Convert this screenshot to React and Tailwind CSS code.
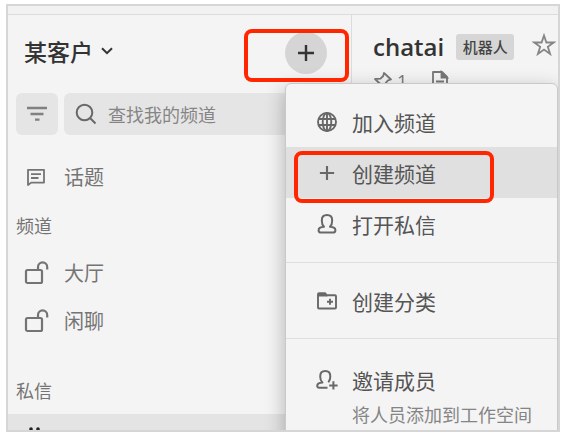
import React from 'react';

const channels = ['大厅', '闲聊'];

const ChevronIcon = () => (
  <svg width="12" height="8" viewBox="0 0 12 8" fill="none" stroke="currentColor" strokeWidth="2">
    <path d="M1 1.2 6 6.2 11 1.2" />
  </svg>
);

const PlusIcon = ({ size = 18 }) => (
  <svg width={size} height={size} viewBox="0 0 18 18" fill="none" stroke="currentColor" strokeWidth="2.4">
    <path d="M9 1v16M1 9h16" />
  </svg>
);

const FilterIcon = () => (
  <svg width="22" height="16" viewBox="0 0 22 16" fill="none" stroke="currentColor" strokeWidth="2.4">
    <path d="M1 2h20M4.5 8h13M9 13.6h4.5" />
  </svg>
);

const SearchIcon = () => (
  <svg width="22" height="22" viewBox="0 0 22 22" fill="none" stroke="currentColor" strokeWidth="2">
    <circle cx="9.5" cy="9.5" r="7.8" />
    <path d="m15 15 5.5 5.5" />
  </svg>
);

const ThreadsIcon = () => (
  <svg width="20" height="20" viewBox="0 0 20 20" fill="none" stroke="currentColor" strokeWidth="1.8">
    <path d="M2 18V2.8h16v12.8H5.2z" strokeLinejoin="round" />
    <path d="M5 7.2h10M5 11h7.5" />
  </svg>
);

const UnlockIcon = () => (
  <svg width="26" height="24" viewBox="0 0 26 24" fill="none" stroke="currentColor" strokeWidth="2.2">
    <rect x="2" y="9" width="16" height="13" rx="1.5" />
    <path d="M14 9V6a4.6 4.6 0 0 1 9.2 0v2.6" />
  </svg>
);

const GlobeIcon = () => (
  <svg width="22" height="22" viewBox="0 0 22 22" fill="none" stroke="currentColor" strokeWidth="1.9">
    <circle cx="11" cy="11" r="9" />
    <ellipse cx="11" cy="11" rx="4.3" ry="9" />
    <path d="M2.6 8h16.8M2.6 14h16.8M11 2v18" />
  </svg>
);

const PersonIcon = () => (
  <svg width="22" height="22" viewBox="0 0 22 22" fill="none" stroke="currentColor" strokeWidth="2" strokeLinejoin="round">
    <path d="M8 13.8C6.6 12.4 5.8 10 5.800 7.400 5.800 4 7.800 2 11 2s5.200 2 5.200 5.400c0 2.600-.8 5-2.200 6.400 3.600.2 5.400.9 5.400 3.400 0 1.600-.8 2.400-2.400 2.400H5c-1.600 0-2.400-.8-2.400-2.400 0-2.500 1.800-3.200 5.400-3.400z" />
  </svg>
);

const PersonAddIcon = () => (
  <svg width="22" height="22" viewBox="0 0 22 22" fill="none" stroke="currentColor" strokeWidth="2" strokeLinejoin="round">
    <path d="M11.500 18.800H3.300c-1.400 0-2.100-.7-2.100-2.100 0-2.200 1.700-2.900 5.200-3.200C5 12.200 4.200 9.900 4.200 7.400 4.200 4 6.200 2 9.300 2s5 2 5 5.400c0 2.300-.7 4.500-2 5.900" />
    <path d="M17.400 12.200v8.400M13.200 16.400h8.400" />
  </svg>
);

const FolderPlusIcon = () => (
  <svg width="22" height="22" viewBox="0 0 22 22" fill="none" stroke="currentColor" strokeWidth="1.9">
    <path d="M2 4.300q0-1 1-1h6.200l1.500 2h8.300q1 0 1 1v11.200q0 1-1 1H3q-1 0-1-1z" strokeLinejoin="round" />
    <path d="M2 3.300h7.500l2 3.200H2z" fill="currentColor" stroke="none" />
    <path d="M14 8.800v6M11 11.800h6" />
  </svg>
);

const StarIcon = () => (
  <svg width="24" height="24" viewBox="0 0 24 24" fill="none" stroke="currentColor" strokeWidth="1.8">
    <path d="m12 2.500 2.400 7h7.300l-5.900 4.300 2.300 7.200L12 16.600 5.900 21l2.300-7.200-5.900-4.300h7.300z" />
  </svg>
);

const PinIcon = () => (
  <svg width="20" height="20" viewBox="0 0 20 20" fill="none" stroke="currentColor" strokeWidth="1.8" strokeLinejoin="round">
    <path d="m11 2 7 6.500-3 .8-2.800 3.400-.7 4.300L2 8l5.500-.4L10.200 5z" />
    <path d="m6.500 12.500-5 5" />
  </svg>
);

const FileIcon = () => (
  <svg width="18" height="22" viewBox="0 0 18 22" fill="none" stroke="currentColor" strokeWidth="1.8">
    <path d="M2 2h9l5 5v13H2z" strokeLinejoin="round" />
    <path d="M10.500 2v5.500H16z" fill="currentColor" />
    <path d="M5 11.500h8M5 15h8" />
  </svg>
);

const MenuItem = ({ icon, label, active }) => (
  <button
    role="menuitem"
    className={
      active
        ? 'relative flex h-[51px] w-full items-center gap-[14px] bg-[#e0e0e0] pl-[30px] text-left'
        : 'relative flex h-[51px] w-full items-center gap-[14px] pl-[30px] text-left'
    }
  >
    <span className="flex w-[22px] shrink-0 justify-center text-[#686868]">{icon}</span>
    <span>{label}</span>
    {active && (
      <span className="absolute top-1 left-2 h-[52px] w-[200px] rounded-lg border-4 border-[#ff2600]" />
    )}
  </button>
);

// Opens under the plus button and lies over the channel view
const CreateMenu = () => (
  <div
    role="menu"
    className="absolute top-[46px] left-0 z-10 w-[273px] rounded-md border border-[#c9c9c9] bg-[#f4f4f4] pt-3 pb-10 text-[21px] leading-[30px] text-[#555] shadow-[0_6px_20px_rgba(0,0,0,0.28)]"
  >
    <MenuItem icon={<GlobeIcon />} label="加入频道" />
    <div className="relative z-10">
      <MenuItem icon={<PlusIcon size={16} />} label="创建频道" active />
    </div>
    <MenuItem icon={<PersonIcon />} label="打开私信" />
    <div className="mt-[13px] mb-3 h-px bg-[#dedede]" />
    <MenuItem icon={<FolderPlusIcon />} label="创建分类" />
    <div className="my-3 h-px bg-[#dedede]" />
    <button role="menuitem" className="flex w-full items-start gap-[14px] pt-[14px] pl-[30px] text-left">
      <span className="flex h-[30px] w-[22px] shrink-0 items-center text-[#686868]">
        <PersonAddIcon />
      </span>
      <span className="flex flex-col">
        <span>邀请成员</span>
        <span className="mt-1 text-[18px] text-[#858585]">将人员添加到工作空间</span>
      </span>
    </button>
  </div>
);

const Sidebar = () => (
  <aside className="flex w-[344px] shrink-0 flex-col border-r border-[#dcdcdc] text-[#747474]">
    <div className="flex h-[78px] shrink-0 items-center justify-between pb-[2px] pl-4">
      <button className="flex items-center gap-2 pb-1 text-[23px] leading-8 font-medium text-[#333]">
        某客户
        <ChevronIcon />
      </button>
      <div className="relative flex h-8 w-[66px] items-center">
        <button
          aria-label="新建"
          className="flex h-[42px] w-[42px] shrink-0 items-center justify-center rounded-full bg-[#d5d5d5] text-[#333]"
        >
          <PlusIcon />
        </button>
        <CreateMenu />
        <span className="absolute top-[-8px] left-[-41px] z-20 h-[53px] w-[105px] rounded-lg border-4 border-[#ff2600]" />
      </div>
    </div>

    <div className="flex gap-[6px] px-2">
      <button
        aria-label="筛选"
        className="flex h-[42px] w-[42px] shrink-0 items-center justify-center rounded-md bg-[#e5e5e5] text-[#808080]"
      >
        <FilterIcon />
      </button>
      <label className="flex h-[42px] min-w-0 flex-1 items-center gap-[11px] rounded-md bg-[#e5e5e5] pl-[11px] text-[#686868]">
        <SearchIcon />
        <input
          type="text"
          aria-label="查找我的频道"
          placeholder="查找我的频道"
          className="min-w-0 flex-1 bg-transparent text-[18px] text-[#777] outline-none placeholder:text-[#858585]"
        />
      </label>
    </div>

    <nav className="flex flex-1 flex-col pt-[18px] text-[20px]">
      <a href="#threads" className="flex h-12 shrink-0 items-center pl-[18px]">
        <span className="w-[38px]">
          <ThreadsIcon />
        </span>
        话题
      </a>
      <h2 className="flex h-12 shrink-0 items-center pl-2 text-[18px]">频道</h2>
      {channels.map(name => (
        <a key={name} href={`#${name}`} className="flex h-12 shrink-0 items-center pl-4">
          <span className="w-10">
            <UnlockIcon />
          </span>
          {name}
        </a>
      ))}
      <h2 className="mt-[21px] flex h-12 shrink-0 items-center pl-2 text-[18px]">私信</h2>
      <a href="#chatai" className="flex h-12 shrink-0 items-start bg-[#e4e4e4] pt-[13px] pl-[21px]">
        <svg width="12" height="24" viewBox="0 0 12 24" fill="#222">
          <circle cx="2" cy="2" r="1.8" />
          <circle cx="9" cy="2" r="1.8" />
        </svg>
      </a>
    </nav>
  </aside>
);

const ChannelHeader = () => (
  <main className="min-w-0 flex-1 overflow-hidden pl-[21px]">
    <div className="flex h-[54px] items-center pt-[10px]">
      <h1 className="font-['Open_Sans'] text-[24px] leading-8 font-semibold text-[#333]">chatai</h1>
      <span className="ml-3 flex h-[26px] w-[58px] shrink-0 items-center justify-center rounded-[3px] bg-[#d6d6d6] text-[15px] font-medium text-[#444]">
        机器人
      </span>
      <button aria-label="收藏" className="ml-[18px] shrink-0 pb-1 text-[#858585]">
        <StarIcon />
      </button>
    </div>
    <div className="flex items-center text-[18px] leading-6 text-[#777]">
      <PinIcon />
      <span className="ml-1 font-['Open_Sans']">1</span>
      <span className="ml-6">
        <FileIcon />
      </span>
    </div>
  </main>
);

const App = () => (
  <div className="h-screen bg-white pt-1 pr-[2px] pb-1 pl-[6px] font-['Noto_Sans_CJK_SC',sans-serif]">
    <div className="flex h-full flex-col overflow-hidden border-2 border-[#d6d6d6] bg-[#f4f4f4]">
      <div className="h-[9px] shrink-0 border-b border-[#dcdcdc] bg-[#f1f1f1]" />
      <div className="flex min-h-0 flex-1">
        <Sidebar />
        <ChannelHeader />
      </div>
    </div>
  </div>
);

export default App;
